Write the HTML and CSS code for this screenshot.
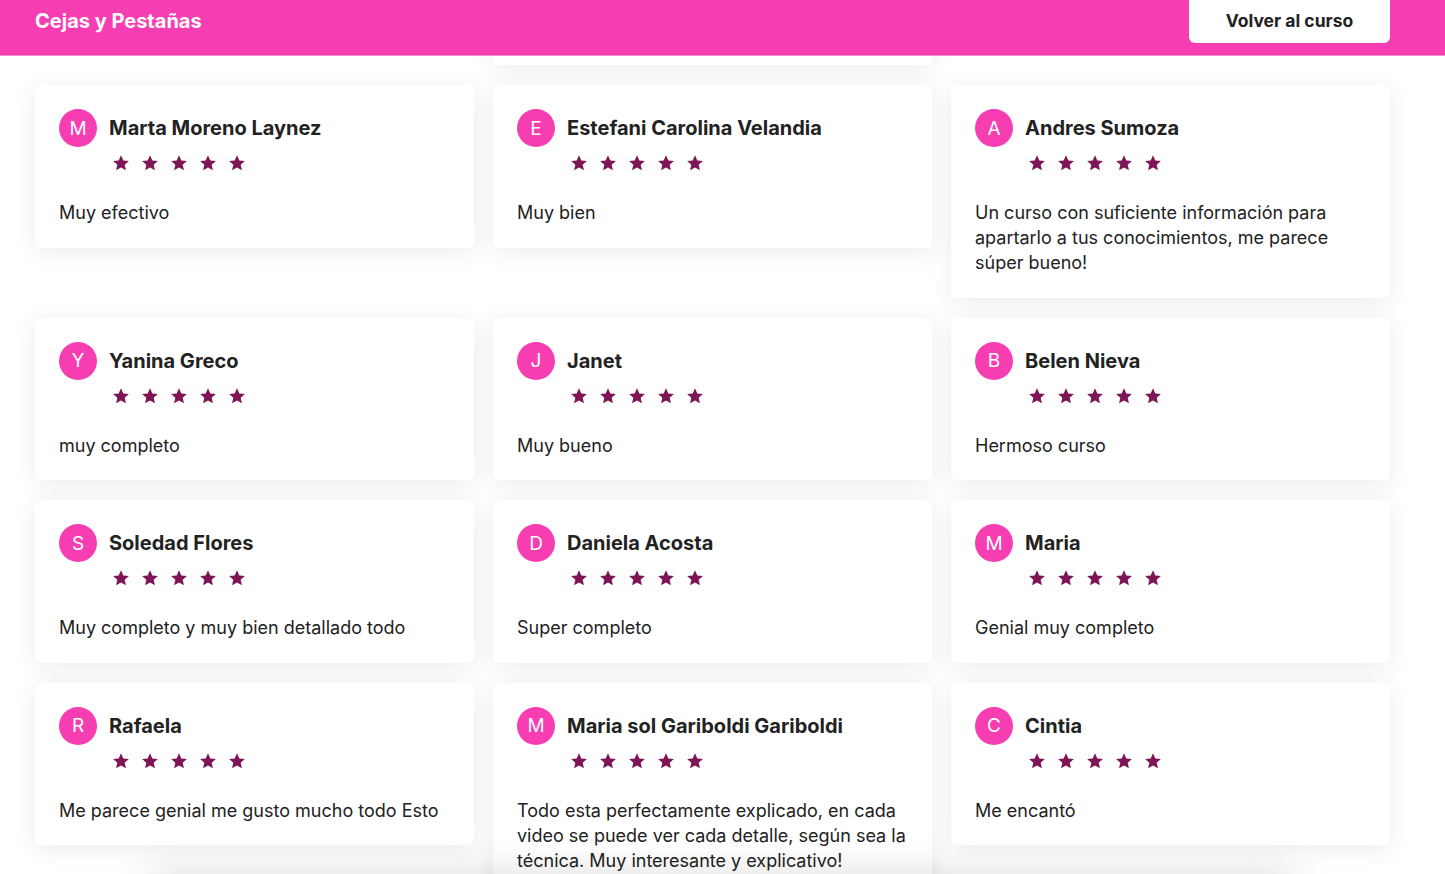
FILE: index.html
```html
<!DOCTYPE html>
<html lang="es">
<head>
    <meta charset="UTF-8">
    <meta name="viewport" content="width=device-width, initial-scale=1.0">
    <title>Cejas y Pestañas - Opiniones</title>
    <link rel="stylesheet" href="styles.css">
</head>
<body>

    <header class="topbar">
        <h1 class="course-title">Cejas y Pestañas</h1>
        <a href="#" class="back-btn">Volver al curso</a>
    </header>

    <!-- Reviews (first row already scrolled under the header) -->
    <main class="reviews" id="reviews"></main>

    <div class="bottom-shade"></div>

    <script>
        const star = '<svg class="star" viewBox="0 0 24 24"><path d="M12 1.8l3.1 6.9 7.4.7-5.6 5 1.7 7.4L12 17.9l-6.6 3.9 1.7-7.4-5.6-5 7.4-.7z"/></svg>';

        const reviews = [
            { name: "Lucia Paz", text: "Excelente" },
            { name: "Carolina Ruiz", text: "Me sirvió muchísimo, explican todo paso a paso y con mucha paciencia, los videos son claros. Gracias!" },
            { name: "Paula Díaz", text: "Muy lindo" },
            { name: "Marta Moreno Laynez", text: "Muy efectivo" },
            { name: "Estefani Carolina Velandia", text: "Muy bien" },
            { name: "Andres Sumoza", text: "Un curso con suficiente información para apartarlo a tus conocimientos, me parece súper bueno!" },
            { name: "Yanina Greco", text: "muy completo" },
            { name: "Janet", text: "Muy bueno" },
            { name: "Belen Nieva", text: "Hermoso curso" },
            { name: "Soledad Flores", text: "Muy completo y muy bien detallado todo" },
            { name: "Daniela Acosta", text: "Super completo" },
            { name: "Maria", text: "Genial muy completo" },
            { name: "Rafaela", text: "Me parece genial me gusto mucho todo Esto" },
            { name: "Maria sol Gariboldi Gariboldi", text: "Todo esta perfectamente explicado, en cada video se puede ver cada detalle, según sea la técnica. Muy interesante y explicativo!" },
            { name: "Cintia", text: "Me encantó" }
        ];

        const container = document.getElementById("reviews");
        reviews.forEach((r, i) => {
            let card = document.createElement("div");
            card.classList.add("review-card");
            if (i < 3) {
                card.classList.add("scrolled-past");
            }
            card.innerHTML = `
                <div class="review-head">
                    <span class="avatar">${r.name.charAt(0)}</span>
                    <span class="review-name">${r.name}</span>
                </div>
                <div class="stars">${star.repeat(5)}</div>
                <p class="review-text">${r.text}</p>`;
            container.appendChild(card);
        });
    </script>

</body>
</html>
```

FILE: styles.css
```css
body {
    font-family: Inter, "Open Sans", sans-serif;
    background-color: #fff;
    margin: 0;
    color: #222;
    overflow: hidden;
}
.topbar {
    position: fixed;
    top: 0;
    left: 0;
    right: 0;
    z-index: 10;
    height: 55px;
    background: #f63db2;
    border-bottom: 1px solid #f88bd0;
    display: flex;
    justify-content: space-between;
    align-items: flex-start;
    padding: 0 55px 0 35px;
}
.course-title {
    margin: 8px 0 0;
    font-size: 20px;
    line-height: 26px;
    font-weight: 700;
    color: white;
}
.back-btn {
    display: flex;
    align-items: center;
    justify-content: center;
    width: 201px;
    height: 43px;
    padding-bottom: 2px;
    box-sizing: border-box;
    background: white;
    border-radius: 0 0 6px 6px;
    color: #222;
    font-size: 17.5px;
    font-weight: 700;
    text-decoration: none;
}
.reviews {
    display: grid;
    grid-template-columns: repeat(3, 439px);
    column-gap: 19px;
    row-gap: 20px;
    align-items: start;
    margin: -147.5px 0 0 35px;
}
.review-card {
    background: white;
    border-radius: 6px;
    box-shadow: 0 4px 24px rgba(0, 0, 0, 0.08);
    padding: 24px 24px 22.5px;
}
.scrolled-past > * {
    visibility: hidden;
}
.review-head {
    display: flex;
    align-items: center;
    gap: 12px;
}
.avatar {
    width: 38px;
    height: 38px;
    border-radius: 50%;
    background: #f63db2;
    color: white;
    font-size: 19px;
    display: flex;
    align-items: center;
    justify-content: center;
}
.review-name {
    font-size: 20px;
    line-height: 26px;
    font-weight: 700;
    color: #222;
}
.stars {
    display: flex;
    gap: 11px;
    margin: 7px 0 0 53px;
}
.star {
    width: 18px;
    height: 18px;
    fill: #7e1557;
}
.review-text {
    margin: 28px 0 0;
    font-size: 18px;
    line-height: 25px;
    color: #222;
}
.bottom-shade {
    position: fixed;
    left: 150px;
    right: 150px;
    bottom: -40px;
    height: 40px;
    box-shadow: 0 0 40px rgba(0, 0, 0, 0.14);
    background: #e6e6e6;
}
```
